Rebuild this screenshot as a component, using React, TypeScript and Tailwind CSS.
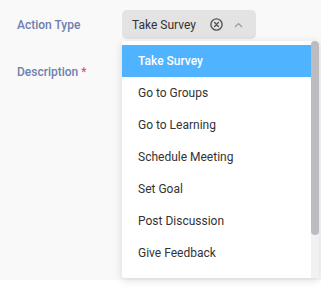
import React from "react";

const options: string[] = [
  "Take Survey",
  "Go to Groups",
  "Go to Learning",
  "Schedule Meeting",
  "Set Goal",
  "Post Discussion",
  "Give Feedback",
];

const ClearIcon = () => (
  <svg width="13" height="13" viewBox="0 0 13 13" fill="none">
    <circle cx="6.5" cy="6.5" r="5.6" stroke="#555" strokeWidth="1.4" />
    <path d="M4.6 4.6L8.4 8.4M8.4 4.6L4.6 8.4" stroke="#555" strokeWidth="1.4" strokeLinecap="round" />
  </svg>
);

const ChevronUp = () => (
  <svg width="9" height="6" viewBox="0 0 9 6" fill="none">
    <path d="M1 5L4.5 1.5L8 5" stroke="#999" strokeWidth="1.1" />
  </svg>
);

const App = () => {
  return (
    <div className="w-[321px] h-[296px] relative overflow-hidden font-['Roboto',sans-serif] text-[12px] flex flex-col">
      <div className="h-[280px] bg-[#f9f9f9] flex flex-col pl-[17px] pt-[10px] gap-[27px]">
        <div className="flex items-center">
          <span className="w-[105px] text-[#6e80ae] font-medium">Action Type</span>
          <div className="w-[134px] h-[29px] bg-[#e3e3e4] rounded-[5px] flex items-center pl-[10px] text-[#333]">
            <span className="w-[78px]">Take Survey</span>
            <span className="flex items-center">
              <ClearIcon />
            </span>
            <span className="flex items-center ml-[11px]">
              <ChevronUp />
            </span>
          </div>
        </div>
        <div className="flex items-center h-[12px]">
          <span className="text-[#6e80ae] font-medium">Description</span>
          <span className="text-[#e53e5b] ml-[3px]">*</span>
        </div>
      </div>
      <div className="flex-1 bg-white" />

      {/* dropdown */}
      <div className="absolute left-[122px] top-[41px] w-[197px] h-[237px] bg-white rounded-[3px] shadow-[0_2px_8px_rgba(0,0,0,0.15)] overflow-hidden flex">
        <div className="flex-1 pt-[4px] flex flex-col">
          {options.map((o, i) => (
            <div
              key={o}
              className={
                i === 0
                  ? "h-[32px] shrink-0 flex items-center pl-[16px] bg-[#4fb3ff] text-white font-medium"
                  : "h-[32px] shrink-0 flex items-center pl-[16px] text-[#333]"
              }
            >
              {o}
            </div>
          ))}
        </div>
        <div className="w-[8px] bg-[#f1f1f1] flex flex-col">
          <div className="h-[194px] bg-[#bcbcc0] rounded-[4px]" />
        </div>
      </div>
    </div>
  );
};

export default App;
